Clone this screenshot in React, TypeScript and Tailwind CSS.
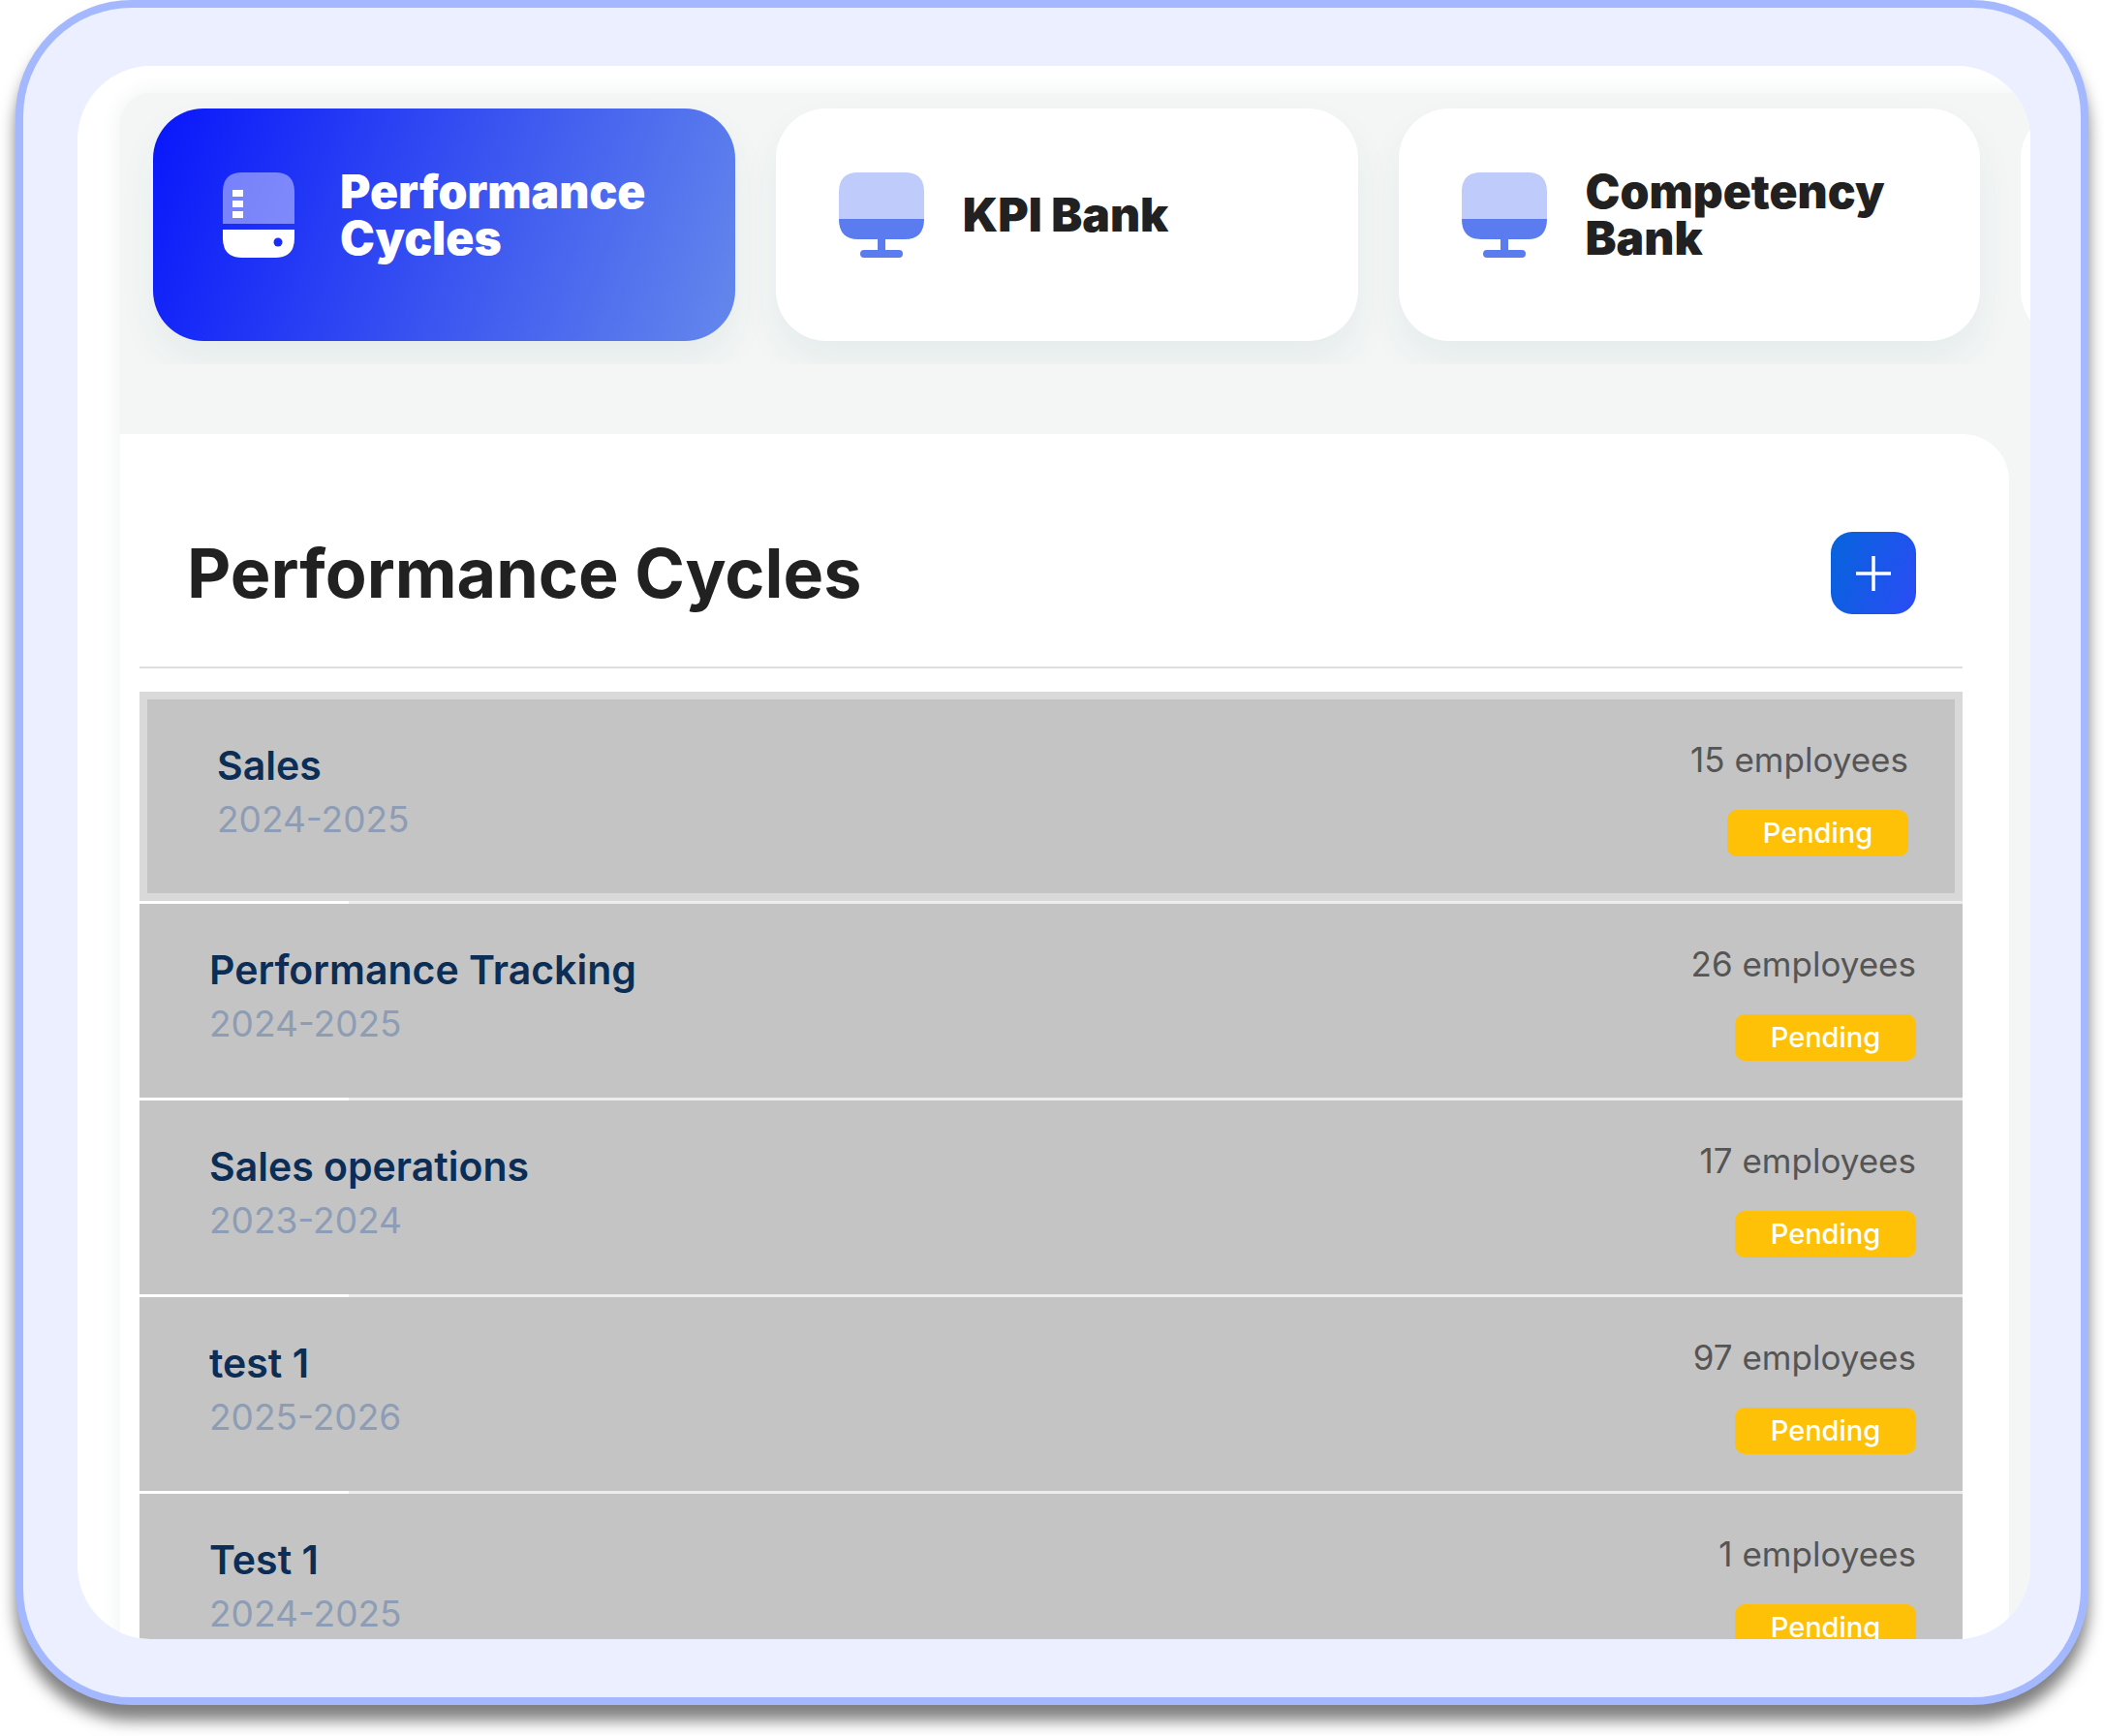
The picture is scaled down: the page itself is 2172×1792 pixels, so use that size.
import { clsx } from 'clsx'

interface Tab {
  label: string
  icon: 'server' | 'monitor'
  active?: boolean
}

interface Cycle {
  name: string
  period: string
  employees: number
  status: string
}

const TABS: Tab[] = [
  { label: 'Performance Cycles', icon: 'server', active: true },
  { label: 'KPI Bank', icon: 'monitor' },
  { label: 'Competency Bank', icon: 'monitor' },
]

const CYCLES: Cycle[] = [
  { name: 'Sales', period: '2024-2025', employees: 15, status: 'Pending' },
  { name: 'Performance Tracking', period: '2024-2025', employees: 26, status: 'Pending' },
  { name: 'Sales operations', period: '2023-2024', employees: 17, status: 'Pending' },
  { name: 'test 1', period: '2025-2026', employees: 97, status: 'Pending' },
  { name: 'Test 1', period: '2024-2025', employees: 1, status: 'Pending' },
]

function ServerIcon() {
  return (
    <svg width={88} height={88} viewBox="0 0 88 88" className="shrink-0" aria-hidden="true">
      <path d="M7 53V20Q7 0 27 0H61Q81 0 81 20V53Z" fill="#fff" fillOpacity={0.42} />
      <path d="M7 59H81V68Q81 88 61 88H27Q7 88 7 68Z" fill="#fff" />
      <path d="M17 18H28V25H17ZM17 29H28V36H17ZM17 40H28V47H17Z" fill="#fff" />
      <circle cx={64} cy={72} r={4.5} fill="#1c2cf6" />
    </svg>
  )
}

function MonitorIcon() {
  return (
    <svg width={88} height={88} viewBox="0 0 88 88" className="shrink-0" aria-hidden="true">
      <path d="M0 48V20Q0 0 20 0H68Q88 0 88 20V48Z" fill="#bfcbfa" />
      <path
        d="M0 48H88Q88 69 68 69H48V80H62Q66 80 66 84T62 88H26Q22 88 22 84T26 80H40V69H20Q0 69 0 48Z"
        fill="#5b7cee"
      />
    </svg>
  )
}

function TabCard({ tab }: { tab: Tab }) {
  return (
    <button
      type="button"
      aria-pressed={!!tab.active}
      className={clsx(
        'flex h-60 shrink-0 basis-[31%] items-center gap-10 rounded-[52px] pr-12 pb-5 pl-[65px] text-left',
        'shadow-[0_20px_40px_rgba(20,60,80,0.06)]',
        tab.active
          ? 'bg-[linear-gradient(110deg,#0816fb,#3c57f0_55%,#6488ec)] text-white'
          : 'bg-white text-[#212121]',
      )}
    >
      {tab.icon === 'server' ? <ServerIcon /> : <MonitorIcon />}
      <span className="text-[48px] leading-[48px] font-black">{tab.label}</span>
    </button>
  )
}

function CycleRow({ cycle, selected }: { cycle: Cycle; selected: boolean }) {
  return (
    <li
      className={clsx(
        'flex h-[200px] shrink-0 items-start justify-between bg-[#c4c4c4] pr-12 pl-[72px]',
        selected && 'box-content border-8 border-[#d9d9d9]',
      )}
    >
      <div className="pt-10">
        <h3 className="text-[41px] leading-[56px] font-semibold text-[#0b2d56]">{cycle.name}</h3>
        <p className="text-[37px] leading-[56px] text-[#8c9db5]">{cycle.period}</p>
      </div>
      <div className="flex flex-col items-end gap-6 pt-[34px]">
        <p className="text-[35px] leading-[56px] text-[#555]">{cycle.employees} employees</p>
        <span className="w-[187px] rounded-[10px] bg-[#ffc107] text-center text-[29px] leading-[48px] font-medium text-white">
          {cycle.status}
        </span>
      </div>
    </li>
  )
}

export default function App() {
  return (
    <div className="flex h-screen bg-white px-4 pb-8 font-[Inter,'Liberation_Sans',sans-serif]">
      <div className="flex min-w-0 flex-1 rounded-[120px] border-8 border-[#a3b8ff] bg-[#ebefff] py-[60px] pr-[52px] pl-14 shadow-[0_16px_16px_rgba(0,0,0,0.5)]">
        <main className="min-w-0 flex-1 overflow-hidden rounded-[76px] bg-white pt-7 pl-11">
          <div className="flex h-full flex-col rounded-tl-[32px] bg-[#f3f6f5] shadow-[0_0_20px_4px_#f3f5f5]">
            <nav aria-label="Modules" className="flex shrink-0 gap-[42px] overflow-hidden pt-4 pb-6 pl-[34px]">
              {TABS.map((tab) => (
                <TabCard key={tab.label} tab={tab} />
              ))}
              {/* next card peeks in from the right edge */}
              <div className="h-60 shrink-0 basis-[31%] rounded-[52px] bg-white" />
            </nav>

            <section className="mt-[72px] mr-[22px] min-h-0 flex-1 overflow-hidden rounded-tr-[48px] bg-white pr-12 pl-5">
              <header className="flex items-center justify-between border-b-2 border-[#dedede] pt-[101px] pr-12 pb-[54px] pl-[49px]">
                <h2 className="text-[70px] leading-[84px] font-bold text-[#212121]">Performance Cycles</h2>
                <button
                  type="button"
                  aria-label="Add cycle"
                  className="flex h-[85px] w-[88px] items-center justify-center rounded-[22px] bg-[linear-gradient(110deg,#0564dc,#2b4cf5)]"
                >
                  <svg width={36} height={36} viewBox="0 0 36 36" fill="none" stroke="#fff" strokeWidth={3.5} aria-hidden="true">
                    <path d="M18 0V36M0 18H36" />
                  </svg>
                </button>
              </header>

              <ul className="mt-6 flex flex-col gap-[3px] bg-[linear-gradient(to_right,#fff_216px,#ededed_216px)]">
                {CYCLES.map((cycle, i) => (
                  <CycleRow key={cycle.name} cycle={cycle} selected={i === 0} />
                ))}
              </ul>
            </section>
          </div>
        </main>
      </div>
    </div>
  )
}
